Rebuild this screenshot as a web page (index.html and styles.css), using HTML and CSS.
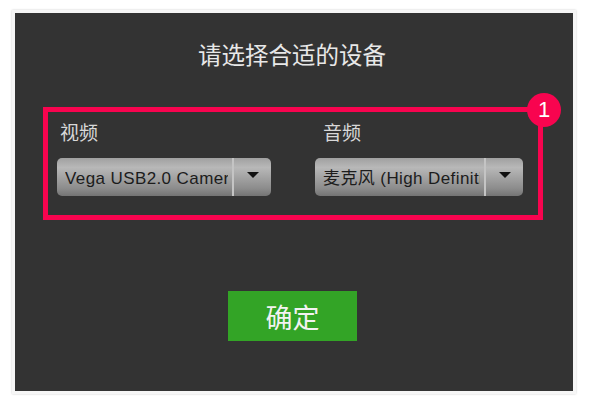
FILE: index.html
```html
<!DOCTYPE html>
<html>
<head>
<title>请选择合适的设备</title>
<meta charset="UTF-8">
<link rel="stylesheet" href="styles.css">
</head>
<body>
<div class="frame">
	<div class="panel">
		<h1 class="title">请选择合适的设备</h1>

		<div class="devices">
			<span class="badge">1</span>

			<div class="device device_video">
				<div class="label">视频</div>
				<div class="select">
					<span class="select_text">Vega USB2.0 Camera</span>
					<span class="select_arrow"><i class="arrow"></i></span>
				</div>
			</div>

			<div class="device device_audio">
				<div class="label">音频</div>
				<div class="select">
					<span class="select_text">麦克风 (High Definition Audio)</span>
					<span class="select_arrow"><i class="arrow"></i></span>
				</div>
			</div>
		</div>

		<button class="ok">确定</button>
	</div>
</div>
</body>
</html>
```
FILE: styles.css
```css
html, body {
	margin: 0;
	height: 405px;
	background-color: #fff;
	overflow: hidden;
}

body {
	font-family: "Liberation Sans", "Noto Sans CJK SC", sans-serif;
	padding: 10px 0 0 12px;
	box-sizing: border-box;
}

.frame {
	width: 564px;
	height: 384px;
	box-sizing: border-box;
	padding: 3px;
	background-color: #f6f6f6;
	box-shadow: 0 0 2px #ccc;
}

.panel {
	height: 378px;
	background-color: #333;
	display: flex;
	flex-direction: column;
	box-sizing: border-box;
}

.title {
	margin: 29px 4px 0 0;
	height: 28px;
	line-height: 28px;
	font-size: 23.5px;
	font-weight: normal;
	color: #e8e8e8;
	text-align: center;
}

.devices {
	position: relative;
	display: flex;
	width: 500px;
	height: 113px;
	margin: 37px 0 0 28px;
	box-sizing: border-box;
	border: 5px solid #f8044f;
}

.badge {
	position: absolute;
	top: -19px;
	right: -23px;
	width: 34px;
	height: 34px;
	border-radius: 50%;
	background-color: #f8044f;
	color: #fff;
	font-size: 22px;
	line-height: 34px;
	text-align: center;
}

.device_video {
	width: 214px;
	margin-left: 9px;
}

.device_audio {
	width: 208px;
	margin-left: 44px;
}

.label {
	margin: 11px 0 0 3px;
	height: 22px;
	line-height: 22px;
	font-size: 19px;
	color: #d8d8d8;
}

.device_audio .label {
	margin-left: 8px;
}

.select {
	display: flex;
	height: 38px;
	margin-top: 13px;
	border-radius: 5px;
	background: linear-gradient(#a0a0a0, #b8b8b8 25%, #8c8c8c 80%, #747474);
	color: #1c1c1c;
	font-size: 17px;
	letter-spacing: 0.4px;
	line-height: 42px;
}

.select_text {
	flex: 1;
	min-width: 0;
	margin: 0 4px 0 8px;
	overflow: hidden;
	white-space: nowrap;
}

.select_arrow {
	width: 39px;
	display: flex;
	align-items: center;
	justify-content: center;
	border-left: 2px solid #c4c4c4;
	box-sizing: border-box;
}

.arrow {
	margin-bottom: 5px;
	border-style: solid;
	border-width: 6px 6.5px 0;
	border-color: #111 transparent transparent;
}

.ok {
	width: 129px;
	height: 50px;
	margin: 71px 0 0 213px;
	padding: 0;
	border: 0;
	background-color: #33a426;
	color: #f2f2f2;
	font-family: inherit;
	font-size: 27px;
}
```
